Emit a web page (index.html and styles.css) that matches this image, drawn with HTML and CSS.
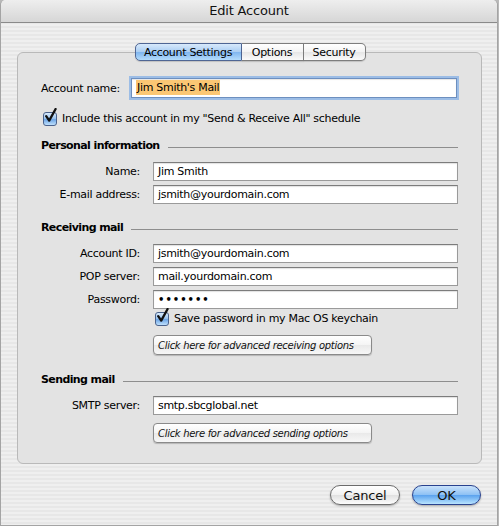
FILE: index.html
```html
<!DOCTYPE html>
<html lang="en">
<head>
  <meta charset="UTF-8">
  <title>Edit Account</title>
  <link rel="stylesheet" href="styles.css">
</head>
<body>
  <div class="window">
    <div class="titlebar">Edit Account</div>
    <div class="content">
      <!-- Tab strip sits across the top edge of the panel -->
      <div class="tabs">
        <span class="tab selected">Account Settings</span>
        <span class="tab">Options</span>
        <span class="tab">Security</span>
      </div>
      <div class="panel">
        <div class="row account-row">
          <label>Account name:</label>
          <div class="field focused"><span class="sel">Jim Smith's Mail</span></div>
        </div>
        <div class="check-row first-check">
          <span class="checkbox"><svg width="13" height="15" viewBox="0 0 13 15"><path d="M2.2 8.2 L5.2 12.6 L11.6 1" fill="none" stroke="#111" stroke-width="2.3" stroke-linejoin="round" stroke-linecap="round"/></svg></span>
          <span>Include this account in my "Send &amp; Receive All" schedule</span>
        </div>

        <!-- Personal information -->
        <div class="section"><h3>Personal information</h3><span class="rule"></span></div>
        <div class="row">
          <label>Name:</label>
          <div class="field">Jim Smith</div>
        </div>
        <div class="row">
          <label>E-mail address:</label>
          <div class="field">jsmith@yourdomain.com</div>
        </div>

        <!-- Receiving mail -->
        <div class="section"><h3>Receiving mail</h3><span class="rule"></span></div>
        <div class="row">
          <label>Account ID:</label>
          <div class="field">jsmith@yourdomain.com</div>
        </div>
        <div class="row">
          <label>POP server:</label>
          <div class="field">mail.yourdomain.com</div>
        </div>
        <div class="row">
          <label>Password:</label>
          <div class="field password">&bull;&bull;&bull;&bull;&bull;&bull;&bull;</div>
        </div>
        <div class="check-row keychain">
          <span class="checkbox"><svg width="13" height="15" viewBox="0 0 13 15"><path d="M2.2 8.2 L5.2 12.6 L11.6 1" fill="none" stroke="#111" stroke-width="2.3" stroke-linejoin="round" stroke-linecap="round"/></svg></span>
          <span>Save password in my Mac OS keychain</span>
        </div>
        <button class="advanced receive">Click here for advanced receiving options</button>

        <!-- Sending mail -->
        <div class="section sending"><h3>Sending mail</h3><span class="rule"></span></div>
        <div class="row">
          <label>SMTP server:</label>
          <div class="field">smtp.sbcglobal.net</div>
        </div>
        <button class="advanced send">Click here for advanced sending options</button>
      </div>

      <div class="footer">
        <button class="pill cancel">Cancel</button>
        <button class="pill ok">OK</button>
      </div>
    </div>
  </div>
</body>
</html>
```

FILE: styles.css
```css
/* General Reset */
body, h3, label, button {
  margin: 0;
  padding: 0;
}

body {
  background: #b9b9b9;
  font-family: 'DejaVu Sans', 'Liberation Sans', sans-serif;
  font-size: 11px;
  letter-spacing: -0.3px;
  color: #000;
}

/* Window */
.window {
  width: 496px;
  height: 525px;
  border: 1px solid #a4a4a4;
  border-top: none;
  border-radius: 5px 5px 0 0;
  background: repeating-linear-gradient(#efefef 0, #efefef 2px, #e7e7e7 2px, #e7e7e7 4px);
  overflow: hidden;
}

.titlebar {
  height: 22px;
  line-height: 22px;
  text-align: center;
  font-size: 13px;
  letter-spacing: -0.2px;
  color: #111;
  background: linear-gradient(#eeeeee, #d6d6d6);
  border-bottom: 1px solid #8a8a8a;
  border-radius: 5px 5px 0 0;
}

.content {
  padding: 20px 15px 0 16px;
}

/* Tabs */
.tabs {
  position: relative;
  z-index: 1;
  display: flex;
  justify-content: center;
  margin: 0 0 -9px 1px;
  height: 18px;
}

.tab {
  display: flex;
  align-items: center;
  justify-content: center;
  box-sizing: border-box;
  width: 62px;
  height: 18px;
  border: 1px solid #7d7d7d;
  border-left: none;
  background: linear-gradient(#ffffff, #f3f3f3 50%, #e6e6e6 51%, #fafafa);
  font-size: 11px;
  white-space: nowrap;
  box-shadow: 0 1px 1px rgba(0, 0, 0, 0.15);
}

.tab:first-child {
  border-left: 1px solid #5d6d8a;
  border-radius: 5px 0 0 5px;
}

.tab:last-child {
  border-radius: 0 5px 5px 0;
}

.tab.selected {
  width: 107px;
  border-color: #4f6694;
  background: linear-gradient(#d8e9fb, #a9cdf3 50%, #7fb5ef 51%, #b4dcfc);
}

/* Group panel */
.panel {
  background: #e3e3e3;
  border: 1px solid #b9b9b9;
  border-radius: 6px;
  padding: 24px 23px 20px 23px;
}

.row {
  display: flex;
  align-items: center;
  height: 19px;
  margin-top: 4px;
}

.row label {
  width: 99px;
  margin-right: 13px;
  text-align: right;
  white-space: nowrap;
}

.account-row {
  height: 22px;
  margin-top: 0;
}

.account-row label {
  width: 90px;
  margin-right: 0;
  text-align: left;
}

.field {
  flex: 1;
  height: 17px;
  line-height: 17px;
  padding: 0 4px;
  background: #fff;
  border: 1px solid #9a9a9a;
  border-top-color: #7c7c7c;
  box-shadow: inset 0 1px 1px rgba(0, 0, 0, 0.12);
  white-space: nowrap;
  overflow: hidden;
}

.field.focused {
  height: 18px;
  line-height: 18px;
  border-color: #6d8fbf;
  box-shadow: 0 0 0 2px #9cbde6, inset 0 1px 1px rgba(0, 0, 0, 0.1);
  margin-right: 1px;
}

.sel {
  background: #fbc774;
  padding: 1px 1px;
}

.field.password {
  font-size: 10px;
  letter-spacing: 1px;
  font-weight: bold;
}

/* Check boxes */
.check-row {
  display: flex;
  align-items: center;
  height: 16px;
  gap: 5px;
}

.first-check {
  margin: 11px 0 0 2px;
}

.keychain {
  margin: 1px 0 0 114px;
}

.checkbox {
  position: relative;
  width: 12px;
  height: 12px;
  margin-top: 2px;
  border: 1px solid #4a628c;
  border-radius: 3px;
  background: linear-gradient(#d9eafb, #9cc6f1 45%, #6ea6e6 55%, #bfe0fc);
}

.checkbox svg {
  position: absolute;
  left: 0;
  top: -5px;
}

/* Section headers */
.section {
  display: flex;
  align-items: center;
  height: 14px;
  margin-top: 12px;
}

.section h3 {
  font-size: 11px;
  font-weight: bold;
  letter-spacing: -0.6px;
  white-space: nowrap;
}

.rule {
  flex: 1;
  height: 1px;
  background: #8e8e8e;
  margin: 4px 0 0 8px;
}

.section + .row {
  margin-top: 10px;
}

.row + .section {
  margin-top: 16px;
}

.sending {
  margin-top: 17px;
}

/* Advanced options buttons */
.advanced {
  display: block;
  width: 219px;
  height: 20px;
  margin-left: 112px;
  padding: 0 4px;
  text-align: left;
  font-family: inherit;
  font-size: 10px;
  font-style: italic;
  letter-spacing: -0.3px;
  color: #111;
  border: 1px solid #8a8a8a;
  border-radius: 4px;
  background: linear-gradient(#ffffff, #f4f4f4 50%, #e9e9e9 51%, #f7f7f7);
  box-shadow: 0 1px 1px rgba(0, 0, 0, 0.2);
}

.advanced.receive {
  margin-top: 9px;
}

.advanced.send {
  margin-top: 8px;
}

/* Dialog buttons */
.footer {
  display: flex;
  justify-content: flex-end;
  gap: 12px;
  margin-top: 21px;
  padding-right: 1px;
}

.pill {
  height: 20px;
  font-family: inherit;
  font-size: 13px;
  letter-spacing: -0.2px;
  border-radius: 10px;
  box-shadow: 0 1px 2px rgba(0, 0, 0, 0.3);
}

.cancel {
  width: 70px;
  border: 1px solid #6b6b6b;
  background: linear-gradient(#ffffff, #f1f1f1 50%, #e0e0e0 51%, #fdfdfd);
  color: #111;
}

.ok {
  width: 69px;
  border: 1px solid #29428f;
  background: linear-gradient(#c9e2fb, #8cc0f4 50%, #5aa2ee 51%, #b9e4ff);
  color: #111;
}
```
